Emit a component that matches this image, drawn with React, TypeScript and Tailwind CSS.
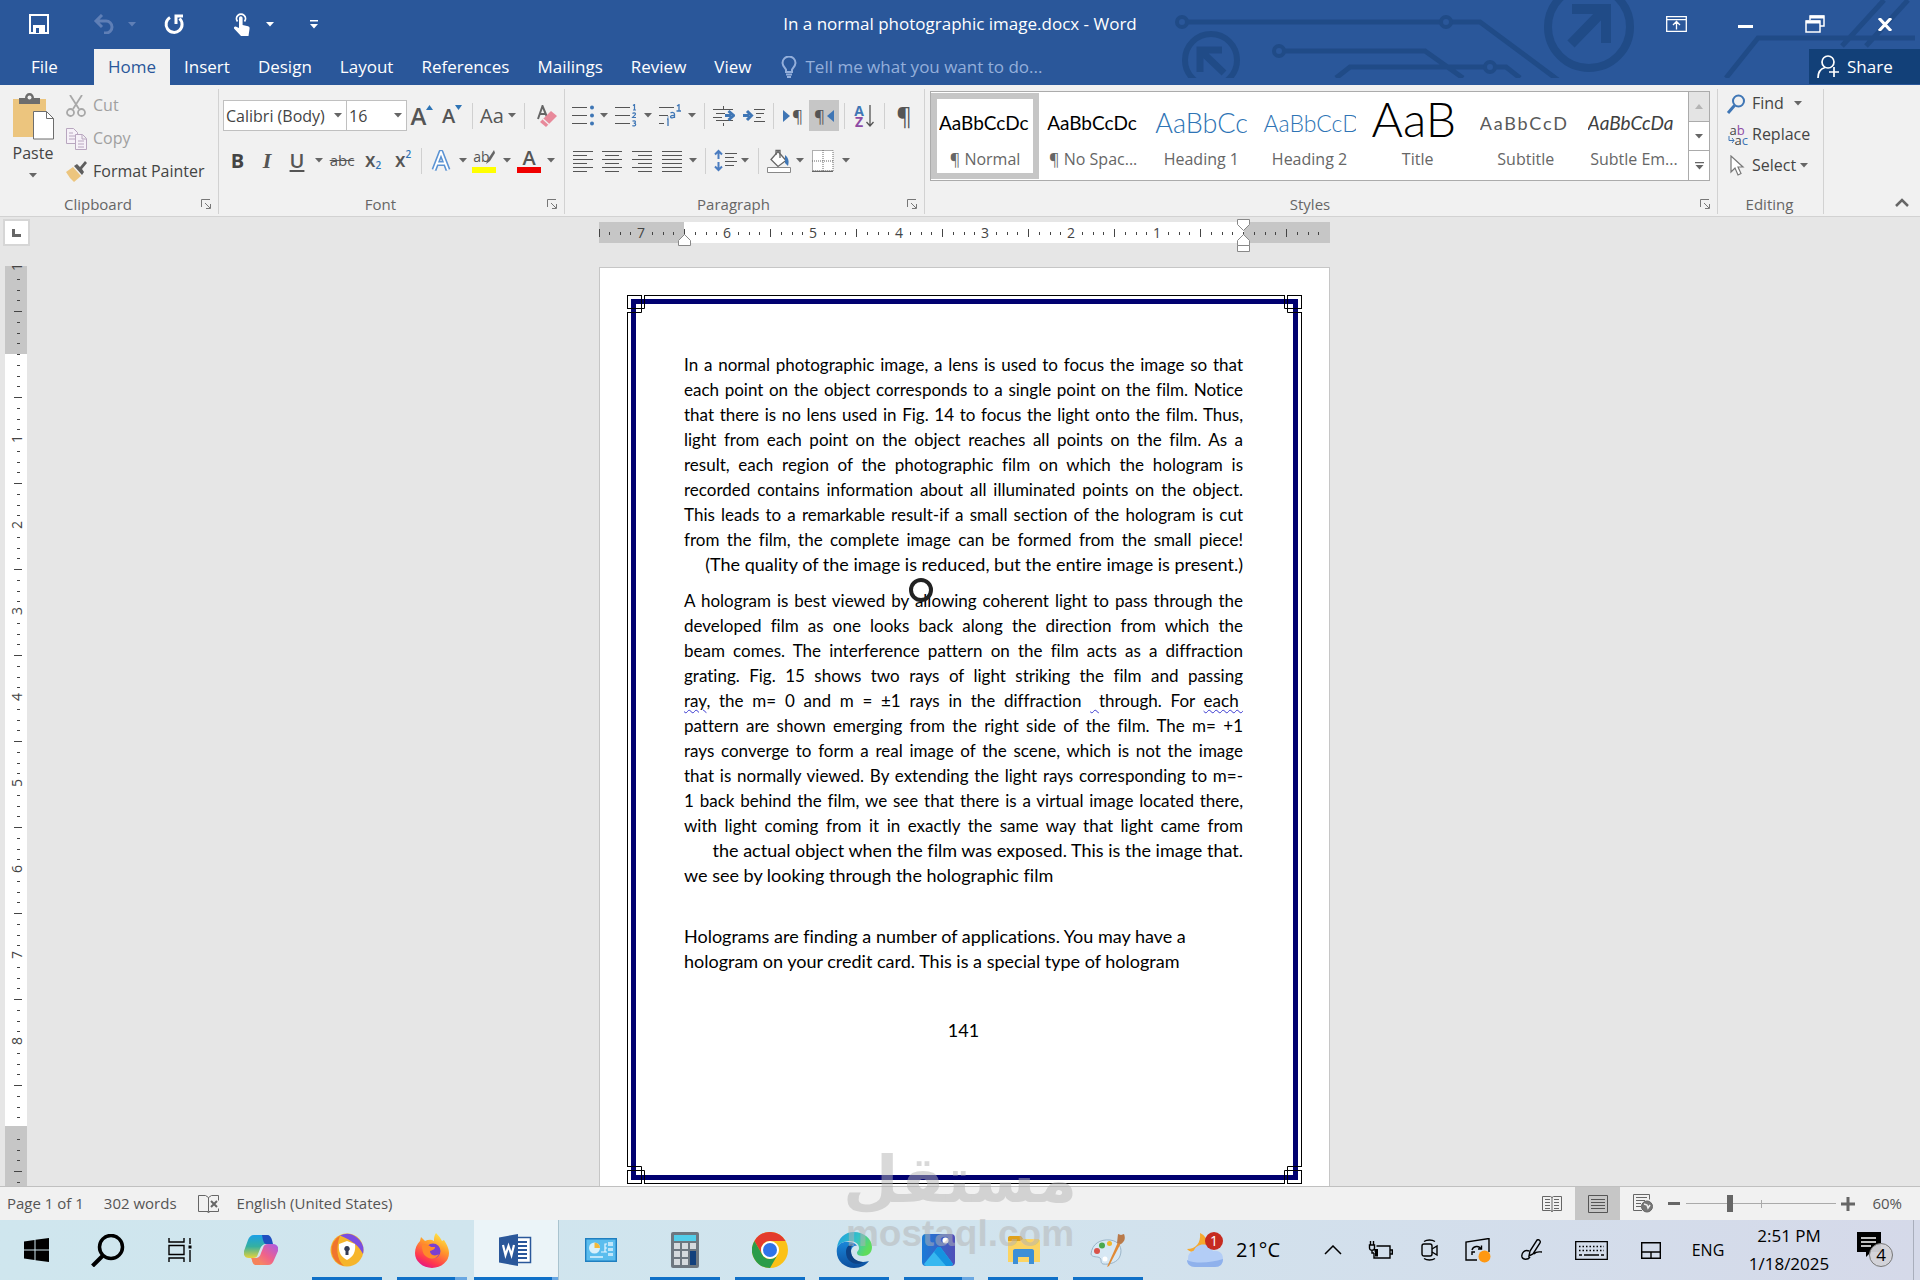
import type { ReactNode } from "react";
import { clsx } from "clsx";

const UI = "font-['Open_Sans','Noto_Sans',sans-serif]";
const BODY = "font-['Lato','Open_Sans',sans-serif]";

const tabs = ["Home", "Insert", "Design", "Layout", "References", "Mailings", "Review", "View"];

const styleItems = [
  { label: "¶ Normal", sample: "AaBbCcDc", look: "text-[19px] leading-[30px] text-black" },
  { label: "¶ No Spac...", sample: "AaBbCcDc", look: "text-[19px] leading-[30px] text-black" },
  { label: "Heading 1", sample: "AaBbCc", look: "text-[27px] leading-[30px] font-light text-[#2e74b5]" },
  { label: "Heading 2", sample: "AaBbCcD", look: "text-[23px] leading-[30px] font-light text-[#2e74b5]" },
  { label: "Title", sample: "AaB", look: "text-[48px] leading-[39px] font-light text-black" },
  { label: "Subtitle", sample: "AaBbCcD", look: "text-[18px] leading-[30px] tracking-widest text-[#5a5a5a]" },
  { label: "Subtle Em...", sample: "AaBbCcDa", look: "text-[19px] leading-[30px] italic text-[#404040]" },
];

const firstParagraph = [
  "In a normal photographic image, a lens is used to focus the image so that",
  "each point on the object corresponds to a single point on the film. Notice",
  "that there is no lens used in Fig. 14 to focus the light onto the film. Thus,",
  "light from each point on the object reaches all points on the film. As a",
  "result, each region of the photographic film on which the hologram is",
  "recorded contains information about all illuminated points on the object.",
  "This leads to a remarkable result-if a small section of the hologram is cut",
  "from the film, the complete image can be formed from the small piece!",
];

const secondParagraphTop = [
  "A hologram is best viewed by allowing coherent light to pass through the",
  "developed film as one looks back along the direction from which the",
  "beam comes. The interference pattern on the film acts as a diffraction",
  "grating. Fig. 15 shows two rays of light striking the film and passing",
];

const secondParagraphRest = [
  "pattern are shown emerging from the right side of the film. The m= +1",
  "rays converge to form a real image of the scene, which is not the image",
  "that is normally viewed. By extending the light rays corresponding to m=-",
  "1 back behind the film, we see that there is a virtual image located there,",
  "with light coming from it in exactly the same way that light came from",
];

type BtnProps = { label: string; className?: string; children: ReactNode };

function Btn({ label, className, children }: BtnProps) {
  return (
    <button type="button" aria-label={label} title={label} className={clsx("flex shrink-0 items-center justify-center", className)}>
      {children}
    </button>
  );
}

function Caret({ className = "text-[#666]" }: { className?: string }) {
  return (
    <svg width="8" height="5" viewBox="0 0 8 5" className={clsx("shrink-0", className)} fill="currentColor">
      <path d="M0 0h8L4 4.5z" />
    </svg>
  );
}

function Drop({ label, className = "w-3.5" }: { label: string; className?: string }) {
  return (
    <Btn label={label} className={clsx("h-[31px]", className)}>
      <Caret />
    </Btn>
  );
}

function Sep({ className }: { className: string }) {
  return (
    <div className={clsx("flex h-[26px] shrink-0 justify-center", className)}>
      <div className="w-px bg-[#d0d0d0]" />
    </div>
  );
}

function Launcher({ label }: { label: string }) {
  return (
    <Btn label={label} className="h-5 w-5">
      <svg width="11" height="11" viewBox="0 0 11 11" fill="none" stroke="#777">
        <path d="M.5 8V.5H9M4 4l5 5M9.500 5v4.500H5" />
      </svg>
    </Btn>
  );
}

function Group({ name, launcher = true, className, children }: { name: string; launcher?: boolean; className?: string; children: ReactNode }) {
  return (
    <section aria-label={name} className={clsx("flex flex-col border-r border-[#d2d2d2]", className)}>
      <div className="flex-1">{children}</div>
      <div className="flex h-5 items-center pr-0.5">
        <span className="flex-1 text-center text-[15px] leading-5 text-[#666]">{name}</span>
        {launcher && <Launcher label={`${name} settings`} />}
      </div>
    </section>
  );
}

/* ---------- title bar ---------- */

function Circuit() {
  return (
    <svg className="pointer-events-none absolute right-0 top-0" width="750" height="78" viewBox="0 0 750 78" fill="none" stroke="#204b87" strokeWidth="5">
      <circle cx="12" cy="22" r="5" strokeWidth="4" />
      <path d="M18 22H270M282 22h28l78 58" />
      <circle cx="276" cy="22" r="5" strokeWidth="4" />
      <circle cx="41" cy="60" r="26" strokeWidth="6" />
      <path d="M30 72V50h22M31 51l23 22" strokeWidth="7" />
      <circle cx="109" cy="51" r="5" strokeWidth="4" />
      <path d="M115 51h140l38 27M166 78l14-11h134" />
      <circle cx="320" cy="67" r="5" strokeWidth="4" />
      <path d="M326 67h10l14 11" />
      <circle cx="419" cy="27" r="41" strokeWidth="8" />
      <path d="M402 9h34v34M434 10l-33 34" strokeWidth="10" />
      <path d="M556 78l32-40h157M672 46L714 0M696 46L738 0" />
    </svg>
  );
}

function TitleBar() {
  return (
    <div className="grid h-12 grid-cols-[1fr_auto_1fr] items-center">
      <div className="flex items-center text-white">
        <Btn label="Save" className="ml-6 w-[30px]">
          <svg width="20" height="20" viewBox="0 0 20 20" fill="none" stroke="currentColor" strokeWidth="2">
            <path d="M1 1h18v18H1z" />
            <path d="M5 19v-7h10v7" fill="currentColor" />
            <path d="M8.500 14v5" stroke="#2a579a" strokeWidth="3" />
          </svg>
        </Btn>
        <Btn label="Undo" className="ml-9 w-7">
          <svg width="22" height="20" viewBox="0 0 22 20" fill="none" stroke="#5f7fb6" strokeWidth="3">
            <path d="M9 1L3 7l6 6M3 7h10a6 6 0 0 1 0 12h-2" />
          </svg>
        </Btn>
        <Btn label="Undo history" className="ml-1 w-5">
          <Caret className="text-[#5f7fb6]" />
        </Btn>
        <Btn label="Repeat" className="ml-[18px] w-7">
          <svg width="22" height="22" viewBox="0 0 22 22" fill="none" stroke="currentColor" strokeWidth="3">
            <path d="M7 4.500A8 8 0 1 0 16.500 5.500" />
            <path d="M13 11V3h7" />
          </svg>
        </Btn>
        <Btn label="Touch mode" className="ml-10 w-7">
          <svg width="20" height="24" viewBox="0 0 20 24" fill="currentColor">
            <path d="M7 6a1.800 1.800 0 0 1 3.600 0v7l5.500 1.200a2 2 0 0 1 1.500 2.300L16.500 24H9l-7-7.500a1.500 1.500 0 0 1 2.300-1.700L7 16z" />
            <path d="M5.500 9.500a4.500 4.500 0 1 1 7 0" fill="none" stroke="currentColor" strokeWidth="1.800" />
          </svg>
        </Btn>
        <Btn label="Touch mode options" className="ml-1 w-5">
          <Caret className="text-white" />
        </Btn>
        <Btn label="Customize toolbar" className="ml-6 w-5">
          <svg width="8" height="9" viewBox="0 0 8 9" fill="currentColor">
            <path d="M0 0h8v1.500H0zM0 4h8L4 8.500z" />
          </svg>
        </Btn>
      </div>
      <h1 className="text-[17px] leading-6 text-white">In a normal photographic image.docx - Word</h1>
      <div className="flex items-center justify-end text-white">
        <Btn label="Ribbon display options" className="w-[69px]">
          <svg width="21" height="16" viewBox="0 0 21 16" fill="none" stroke="currentColor" strokeWidth="1.300">
            <path d="M.7.7h19.600v14.600H.7zM.7 3.700h19.600M10.500 13.500V6M7 9l3.500-3.500L14 9" />
          </svg>
        </Btn>
        <Btn label="Minimize" className="w-[69px] pt-1">
          <span className="h-[3px] w-[15px] bg-white" />
        </Btn>
        <Btn label="Restore" className="w-[70px]">
          <svg width="20" height="18" viewBox="0 0 20 18" fill="none" stroke="currentColor" strokeWidth="1.500">
            <path d="M5 5V1h14v10h-4M1 6h14v11H1z" />
            <path d="M1 7h14M5 2h14" strokeWidth="3" />
          </svg>
        </Btn>
        <Btn label="Close" className="w-[70px]">
          <svg width="14" height="13" viewBox="0 0 14 13" stroke="currentColor" strokeWidth="3">
            <path d="M1 0l12 13M13 0L1 13" />
          </svg>
        </Btn>
      </div>
    </div>
  );
}

function TabRow() {
  return (
    <nav className="flex h-[37px] items-stretch pt-px text-[17px] text-white">
      <a href="#file" className="flex w-[94px] items-center pl-[31px]">File</a>
      {tabs.map((tab) => (
        <a
          key={tab}
          href={`#${tab.toLowerCase()}`}
          className={clsx("flex items-center px-[14px]", tab === "Home" && "bg-[#f1f1f1] text-[#2a579a]")}
        >
          {tab}
        </a>
      ))}
      <label className="ml-4 flex items-center gap-2 text-[#94afdb]">
        <svg width="16" height="22" viewBox="0 0 16 22" fill="none" stroke="currentColor" strokeWidth="2">
          <path d="M5 16v-2.500C3 11 1.500 9.500 1.500 7a6.500 6.500 0 0 1 13 0c0 2.500-1.500 4-3.500 6.500V16zM5 18.500h6M6 21h4" />
        </svg>
        <input type="text" aria-label="Tell me what you want to do" placeholder="Tell me what you want to do..." className="w-[260px] bg-transparent placeholder:text-[#94afdb] outline-none" />
      </label>
      <button type="button" className="mb-px ml-auto flex w-[111px] items-center gap-2 bg-[#124078] pl-2">
        <svg width="22" height="24" viewBox="0 0 22 24" fill="none" stroke="currentColor" strokeWidth="1.700">
          <circle cx="11" cy="7" r="6" />
          <path d="M1 23c0-6 3-9.500 7-10.500M17 12v10M12 17h10" />
        </svg>
        Share
      </button>
    </nav>
  );
}

/* ---------- ribbon ---------- */

function ClipboardGroup() {
  return (
    <Group name="Clipboard" className="w-[219px]">
      <div className="flex">
        <button type="button" className="ml-[5px] mt-1 flex w-14 flex-col items-center text-[16px] leading-6 text-[#444]">
          <svg width="42" height="48" viewBox="0 0 42 48">
            <path d="M1 6h33v38H1z" fill="#ecc57e" />
            <path d="M7 11V5h6c0-3 2-5 4.500-5S22 2 22 5h6v6z" fill="#6d6d6d" />
            <circle cx="17.500" cy="4.500" r="2" fill="#f1f1f1" />
            <path d="M21.500 18.500h13l7 7V46h-20z" fill="#fff" stroke="#6d6d6d" />
            <path d="M34.500 18.500v7h7" fill="none" stroke="#6d6d6d" />
          </svg>
          Paste
          <Caret className="mt-2 text-[#666]" />
        </button>
        <div className="ml-[5px] flex flex-col gap-2 pt-1 text-[16px] leading-[25px]">
          <button type="button" className="flex items-center gap-1.5 text-[#a0a0a0]">
            <svg width="21" height="22" viewBox="0 0 21 22" fill="none" stroke="#a8a8a8" strokeWidth="1.800">
              <path d="M4 0l9 14M16 0L7 14" />
              <circle cx="4.500" cy="17.500" r="3.500" />
              <circle cx="15.500" cy="17.500" r="3.500" />
            </svg>
            Cut
          </button>
          <button type="button" className="flex items-center gap-1.5 text-[#a0a0a0]">
            <svg width="21" height="22" viewBox="0 0 21 22" fill="#f6f1f8" stroke="#b8a6bf">
              <path d="M.5.5h7l4 4v11H.5zM3 5h4M3 8h6M3 11h6" />
              <path d="M9.500 6.500h7l4 4v11h-11zM16 7v4h4M12 13h6M12 16h6M12 19h6" />
            </svg>
            Copy
          </button>
          <button type="button" className="flex items-center gap-1.5 text-[#444]">
            <svg width="21" height="21" viewBox="0 0 21 21">
              <path d="M0 11l7-5 8 9-7 6-4-4z" fill="#ecc57e" />
              <path d="M8 5l3-2 3 3 5-6 2 2-5 6 2 3-2 3z" fill="#5e5e5e" />
            </svg>
            Format Painter
          </button>
        </div>
      </div>
    </Group>
  );
}

function Combo({ label, value, className }: { label: string; value: string; className: string }) {
  return (
    <div className={clsx("relative h-[31px] shrink-0 border border-[#c0c0c0] bg-white", className)}>
      <select aria-label={label} className="h-full w-full appearance-none overflow-hidden bg-transparent pl-0.5 pr-3.5 text-[16px] text-[#444]">
        <option>{value}</option>
      </select>
      <span className="pointer-events-none absolute inset-y-0 right-1 flex items-center">
        <Caret />
      </span>
    </div>
  );
}

function FontGroup() {
  return (
    <Group name="Font" className="w-[346px]">
      <div className="flex flex-col gap-3.5 pl-1 pt-[11px] text-[#555]">
        <div className="flex h-[31px] items-center">
          <Combo label="Font name" value="Calibri (Body)" className="w-[124px]" />
          <Combo label="Font size" value="16" className="-ml-px w-[61px]" />
          <Btn label="Grow font" className="w-[30px] text-[24px] font-semibold leading-[31px]">
            A<svg width="7" height="5" viewBox="0 0 7 5" fill="#2e74b5" className="mb-4"><path d="M0 5h7L3.500 0z" /></svg>
          </Btn>
          <Btn label="Shrink font" className="w-[30px] text-[20px] font-semibold leading-[31px]">
            A<svg width="7" height="5" viewBox="0 0 7 5" fill="#2e74b5" className="mb-4"><path d="M0 0h7L3.500 5z" /></svg>
          </Btn>
          <Sep className="w-2.5" />
          <Btn label="Change case" className="w-[42px] gap-1 text-[20px] leading-[31px]">
            Aa <Caret />
          </Btn>
          <Sep className="w-2.5" />
          <Btn label="Clear formatting" className="w-[36px]">
            <svg width="20" height="22" viewBox="0 0 20 22">
              <path d="M1 14L5.500 1 10 12M3 9h5" fill="none" stroke="#666" strokeWidth="2" />
              <path d="M3 17L14 6l6 5L9 22z" fill="#e8899a" />
              <path d="M6 14l6 5.500" stroke="#f1f1f1" strokeWidth="1.200" />
            </svg>
          </Btn>
        </div>
        <div className="flex h-[31px] items-center">
          <Btn label="Bold" className="w-[29px] text-[20px] font-bold leading-[31px] text-[#444]">B</Btn>
          <Btn label="Italic" className="w-[30px] font-['Liberation_Serif',serif] text-[22px] font-bold italic leading-[31px]">I</Btn>
          <Btn label="Underline" className="w-[30px] text-[20px] font-semibold leading-[31px] underline underline-offset-2">U</Btn>
          <Drop label="Underline style" />
          <Btn label="Strikethrough" className="w-8 text-[15px] leading-[31px] line-through">abc</Btn>
          <Btn label="Subscript" className="w-[30px] text-[19px] font-semibold leading-[31px]">
            x<sub className="mt-1 text-[10px] text-[#2e74b5]">2</sub>
          </Btn>
          <Btn label="Superscript" className="w-[30px] text-[19px] font-semibold leading-[31px]">
            x<sup className="mb-1 text-[10px] text-[#2e74b5]">2</sup>
          </Btn>
          <Sep className="w-1.5" />
          <Btn label="Text effects" className="w-[34px]">
            <svg width="20" height="22" viewBox="0 0 20 22" fill="none" strokeLinejoin="round">
              <path d="M3 20L10 2l7 18M6 13.500h8" stroke="#5b93d3" strokeWidth="5" />
              <path d="M3 20L10 2l7 18M6 13.500h8" stroke="#fff" strokeWidth="2" />
            </svg>
          </Btn>
          <Drop label="Text effect options" className="w-2.5" />
          <Btn label="Highlight colour" className="w-8 flex-col">
            <span className="flex h-[18px] text-[14px] leading-4">
              ab
              <svg width="9" height="17" viewBox="0 0 9 17" className="-ml-1">
                <path d="M8 1L2 10l-2 5 4-3 5-8z" fill="#666" />
              </svg>
            </span>
            <span className="h-1.5 w-6 bg-[#ff0]" />
          </Btn>
          <Drop label="Highlight colours" />
          <Btn label="Font colour" className="w-[30px] flex-col">
            <span className="h-[18px] text-[20px] font-semibold leading-[18px]">A</span>
            <span className="h-1.5 w-6 bg-[#f00000]" />
          </Btn>
          <Drop label="Font colours" />
        </div>
      </div>
    </Group>
  );
}

function AlignIcon({ d }: { d: string }) {
  return (
    <svg width="20" height="22" viewBox="0 0 20 22" stroke="#555" strokeWidth="1">
      <path d={d} />
    </svg>
  );
}

function ListLines() {
  return <path d="M0 3.500h15M0 11.500h15M0 19.500h15" stroke="#555" />;
}

function ParagraphGroup() {
  return (
    <Group name="Paragraph" className="w-[360px]">
      <div className="flex flex-col gap-3.5 pl-1 pt-[11px] text-[#555]">
        <div className="flex h-[31px] items-center">
          <Btn label="Bullets" className="w-[28px]">
            <svg width="22" height="23" viewBox="0 0 22 23">
              <ListLines />
              <g fill="#3f76b5"><circle cx="20" cy="3.500" r="2" /><circle cx="20" cy="11.500" r="2" /><circle cx="20" cy="19.500" r="2" /></g>
            </svg>
          </Btn>
          <Drop label="Bullet library" />
          <Btn label="Numbering" className="w-[30px]">
            <svg width="22" height="23" viewBox="0 0 22 23">
              <ListLines />
              <g fill="none" stroke="#3f76b5" strokeWidth="1.200">
                <path d="M18 1.500l1.500-1V6M18 6h3M17.500 9.500c1-1 3-.8 3 .5 0 1.200-2 2-3 3.500h3.500M17.500 17.300c1-.8 3-.6 3 .6 0 .8-.8 1.200-1.800 1.200 1.200 0 2 .6 2 1.500 0 1.500-2.200 1.600-3.300.9" />
              </g>
            </svg>
          </Btn>
          <Drop label="Numbering library" />
          <Btn label="Multilevel list" className="w-[30px]">
            <svg width="23" height="23" viewBox="0 0 23 23">
              <path d="M0 3.500h15M0 11.500h9M0 19.500h5" stroke="#555" />
              <g fill="none" stroke="#3f76b5" strokeWidth="1.300">
                <path d="M18 2l2-1.300V7M17.500 7H22M11.500 9c1.500-1 4-.7 4 1.200V14M15.500 11.300c-2-.1-4 .2-4 1.500 0 1.500 3 1.500 4-.3M8 15h1v7M9 12.500v1" />
              </g>
            </svg>
          </Btn>
          <Drop label="Multilevel library" />
          <Sep className="w-2.5" />
          <Btn label="Decrease indent" className="w-[30px]">
            <svg width="22" height="20" viewBox="0 0 22 20" fill="none" stroke="#555">
              <path d="M0 3.500h20M3 7.500h9M0 11.500h9M3 14.500h17M10.500 0v3M10.500 17v3" />
              <path d="M12 9.500h6M15.500 5l5 4.500-5 4.500" stroke="#3f76b5" strokeWidth="3" />
            </svg>
          </Btn>
          <Btn label="Increase indent" className="w-[30px]">
            <svg width="22" height="16" viewBox="0 0 22 16" fill="none" stroke="#555">
              <path d="M11 1.500h11M13 5.500h8M13 9.500h5M11 13.500h11" />
              <path d="M0 7.500h6M4 3l4.500 4.500L4 12" stroke="#3f76b5" strokeWidth="3" />
            </svg>
          </Btn>
          <Sep className="w-2" />
          <Btn label="Left-to-right" className="w-8 gap-0.5">
            <svg width="7" height="12" viewBox="0 0 7 12" fill="#3f76b5"><path d="M0 0v12l7-6z" /></svg>
            <span className="text-[17px] leading-[31px]">¶</span>
          </Btn>
          <Btn label="Right-to-left" className="h-[31px] w-[30px] gap-0.5 bg-[#c6c6c6]">
            <span className="text-[17px] leading-[31px]">¶</span>
            <svg width="7" height="12" viewBox="0 0 7 12" fill="#3f76b5"><path d="M7 0v12L0 6z" /></svg>
          </Btn>
          <Sep className="w-2.5" />
          <Btn label="Sort" className="w-[30px] gap-0.5">
            <span className="flex flex-col text-[14px] font-bold leading-[11px]">
              <span className="text-[#3f76b5]">A</span>
              <span className="text-[#8e4ba5]">Z</span>
            </span>
            <svg width="8" height="22" viewBox="0 0 8 22" fill="none" stroke="#555" strokeWidth="1.300"><path d="M4 0v21M.5 17L4 21l3.500-4" /></svg>
          </Btn>
          <Sep className="w-2.5" />
          <Btn label="Show paragraph marks" className="w-[30px] text-[24px] leading-[31px]">¶</Btn>
        </div>
        <div className="flex h-[31px] items-center">
          <Btn label="Align left" className="w-[28px]"><AlignIcon d="M0 1.500h20M0 5.500h14M0 9.500h20M0 13.500h14M0 17.500h20M0 21.500h14" /></Btn>
          <Btn label="Center" className="w-[30px]"><AlignIcon d="M0 1.500h20M3 5.500h14M0 9.500h20M3 13.500h14M0 17.500h20M3 21.500h14" /></Btn>
          <Btn label="Align right" className="w-[30px]"><AlignIcon d="M0 1.500h20M6 5.500h14M0 9.500h20M6 13.500h14M0 17.500h20M6 21.500h14" /></Btn>
          <Btn label="Justify" className="w-[30px]"><AlignIcon d="M0 1.500h20M0 5.500h20M0 9.500h20M0 13.500h20M0 17.500h20M0 21.500h20" /></Btn>
          <Drop label="Justify options" className="w-3" />
          <Sep className="w-3" />
          <Btn label="Line spacing" className="w-[28px]">
            <svg width="23" height="23" viewBox="0 0 23 23" fill="none">
              <path d="M11 4.500h12M11 8.500h9M11 12.500h12M11 16.500h9" stroke="#555" />
              <path d="M4.500 10V2M1 5.500L4.500 2 8 5.500M4.500 13v8M1 17.500L4.500 21 8 17.500" stroke="#4a7cc0" strokeWidth="2" />
            </svg>
          </Btn>
          <Drop label="Line spacing options" className="w-3" />
          <Sep className="w-3.5" />
          <Btn label="Shading" className="w-[28px]">
            <svg width="24" height="24" viewBox="0 0 24 24" fill="none">
              <path d="M11 2.500l8 9-8 6-7-7z" fill="#fff" stroke="#666" strokeWidth="1.300" />
              <path d="M9 6V1.500h4V9" stroke="#666" strokeWidth="1.300" />
              <path d="M18 6c4 3 4 7 3 11l-3-3z" fill="#3f76b5" />
              <path d="M.5 18.500h23v5H.5z" fill="#fff" stroke="#888" />
            </svg>
          </Btn>
          <Drop label="Shading colours" />
          <Btn label="Borders" className="w-[32px]">
            <svg width="22" height="22" viewBox="0 0 22 22" fill="#fff" stroke="#666">
              <path d="M.5.500h20.500v20.500H.5zM11 0v21M0 11h21" strokeDasharray="1 1" />
              <path d="M0 21.500h21" strokeWidth="1.500" />
            </svg>
          </Btn>
          <Drop label="Border options" />
        </div>
      </div>
    </Group>
  );
}

function StylesGroup() {
  return (
    <Group name="Styles" className="min-w-0 flex-1">
      <div className="ml-[5px] mr-[7px] mt-[2px] flex h-[90px] border border-[#ababab] bg-white">
        <div className="flex min-w-0 flex-1">
          {styleItems.map((item, i) => (
            <button
              key={item.label}
              type="button"
              className={clsx(
                "my-px flex min-w-0 flex-1 flex-col items-center overflow-hidden",
                i === 0 ? "border-[6px] border-[#c6c6c6] px-0.5" : "px-2 py-1.5"
              )}
            >
              <span className={clsx("flex h-[39px] w-full shrink-0 items-end overflow-hidden whitespace-nowrap", BODY, item.look)}>{item.sample}</span>
              <span className="mt-2 whitespace-nowrap text-[16px] leading-[26px] text-[#666]">{item.label}</span>
            </button>
          ))}
        </div>
        <div className="flex w-[21px] flex-col divide-y divide-[#ababab] border-l border-[#ababab]">
          <Btn label="Previous styles" className="flex-1 bg-[#e4e4e4]">
            <svg width="8" height="5" viewBox="0 0 8 5" fill="#b4b4b4"><path d="M0 5h8L4 0z" /></svg>
          </Btn>
          <Btn label="Next styles" className="flex-1"><Caret /></Btn>
          <Btn label="More styles" className="flex-1">
            <svg width="9" height="8" viewBox="0 0 9 8" fill="#666"><path d="M0 0h9v1.200H0zM.5 3h8l-4 4.500z" /></svg>
          </Btn>
        </div>
      </div>
    </Group>
  );
}

function EditingGroup() {
  return (
    <Group name="Editing" launcher={false} className="w-[106px]">
      <div className="flex flex-col items-start gap-1.5 pl-2 text-[16px] leading-[25px] text-[#444]">
        <button type="button" className="mt-0.5 flex items-center gap-1.5">
          <svg width="20" height="20" viewBox="0 0 20 20" fill="none" stroke="#3f76b5" strokeWidth="2">
            <circle cx="12.500" cy="7" r="5.500" /><path d="M8.500 11.500L2 19" strokeWidth="3" />
          </svg>
          Find
          <span className="ml-1"><Caret /></span>
        </button>
        <button type="button" className="flex items-center gap-1">
          <span className="flex w-[22px] flex-col text-[13px] leading-[10px]">
            <span>a<span className="text-[#8e4ba5]">b</span></span>
            <span className="flex items-center justify-end">
              <svg width="7" height="8" viewBox="0 0 7 8" fill="none" stroke="#3f76b5"><path d="M1 0v4.500h5M4 2l2 2.500L4 7" /></svg>
              a<span className="text-[#3f76b5]">c</span>
            </span>
          </span>
          Replace
        </button>
        <button type="button" className="flex items-center gap-1.5">
          <svg width="20" height="22" viewBox="0 0 20 22" fill="#fff" stroke="#777" strokeWidth="1.200">
            <path d="M5 1v16l4-4 3 7 3-1.500-3-6.500h5z" />
          </svg>
          <span className="flex items-center gap-1">Select <Caret /></span>
        </button>
      </div>
    </Group>
  );
}

function Ribbon() {
  return (
    <div className="flex h-[132px] items-stretch border-b border-[#d2d2d2] bg-[#f1f1f1] pb-0.5 pt-1">
      <ClipboardGroup />
      <FontGroup />
      <ParagraphGroup />
      <StylesGroup />
      <EditingGroup />
      <div className="flex w-24 items-end justify-end pb-0.5 pr-2">
        <Btn label="Collapse ribbon" className="h-5 w-5">
          <svg width="14" height="9" viewBox="0 0 14 9" fill="none" stroke="#666" strokeWidth="2.500"><path d="M1 8l6-6 6 6" /></svg>
        </Btn>
      </div>
    </div>
  );
}

/* ---------- rulers ---------- */

const INCH = 86;

// Tick marks every eighth of an inch, taller at the half, none where a number stands.
function ticks(from: number, to: number, zero: number) {
  const marks: { at: number; half: boolean }[] = [];
  for (let n = Math.ceil(((from - zero) * 8) / INCH); zero + (n * INCH) / 8 < to; n++) {
    if (n !== 0 && n % 8 === 0) continue;
    marks.push({ at: zero + (n * INCH) / 8, half: Math.abs(n % 8) === 4 });
  }
  return marks;
}

function HorizontalRuler() {
  return (
    <svg width="731" height="36" viewBox="0 0 731 36" className="block shrink-0" fontSize="14" fill="#444">
      <path d="M0 5h731v21H0z" fill="#c6c6c6" />
      <path d="M85 5h560v21H85z" fill="#fff" />
      <path d="M0 12h1v8H0z" />
      {ticks(4, 728, 644).map((t) => (
        <path key={t.at} d={t.half ? `M${Math.round(t.at)} 12h1v8h-1z` : `M${Math.round(t.at)} 15h1v3h-1z`} />
      ))}
      {[1, 2, 3, 4, 5, 6, 7].map((n) => (
        <text key={n} x={644 - n * INCH} y="21" textAnchor="middle">{n}</text>
      ))}
      <g fill="#fff" stroke="#888">
        <path d="M79.500 28.500v-5l6-6 6 6v5z" />
        <path d="M638.500 2.500h12v5l-6 6-6-6z" />
        <path d="M638.500 28.500v-5l6-6 6 6v5z" />
        <path d="M638.500 28.500h12v6h-12z" />
      </g>
    </svg>
  );
}

function VerticalRuler() {
  return (
    <svg width="22" height="922" viewBox="0 0 22 922" className="block" fontSize="14" fill="#444">
      <path d="M0 0h22v922H0z" fill="#c6c6c6" />
      <path d="M0 88h22v772H0z" fill="#fff" />
      {ticks(8, 922, 88).map((t) => (
        <path key={t.at} d={t.half ? `M9 ${Math.round(t.at)}v1h8v-1z` : `M12 ${Math.round(t.at)}v1h3v-1z`} />
      ))}
      {[-1, 1, 2, 3, 4, 5, 6, 7, 8].map((n) => (
        <text key={n} transform={`translate(17 ${87 + n * INCH}) rotate(-90)`} textAnchor="middle">{Math.abs(n)}</text>
      ))}
    </svg>
  );
}

/* ---------- document ---------- */

function Corner({ className }: { className: string }) {
  return (
    <svg width="20" height="20" viewBox="0 0 20 20" className={clsx("pointer-events-none absolute", className)} fill="none">
      <path d="M15 .5h2M.5 14v3" stroke="#fff" strokeWidth="1" />
      <path d="M17.500 .5v13H.5V.5h14v17H.5" stroke="#000" />
    </svg>
  );
}

function Justified({ children }: { children: ReactNode }) {
  return <span className="block whitespace-nowrap text-justify text-[17px] [text-align-last:justify]">{children}</span>;
}

const squiggle = "underline decoration-[#3a3ad0] decoration-wavy decoration-1 underline-offset-2";

function Page() {
  return (
    <article className="relative w-[731px] border border-[#c6c6c6] bg-white px-[27px] pb-8 pt-[27px]">
      <div className="relative border border-black p-[3px]">
        <div
          className={clsx(
            "border-[5px] border-[#000070] pb-[132px] pl-[48px] pr-[50px] pt-[48px] text-[18px] leading-[25px] text-black [font-variant-ligatures:none]",
            BODY
          )}
        >
          <p>
            {firstParagraph.map((line) => <Justified key={line}>{line}</Justified>)}
            <span className="block text-right">(The quality of the image is reduced, but the entire image is present.)</span>
          </p>
          <p className="mt-[11px]">
            {secondParagraphTop.map((line) => <Justified key={line}>{line}</Justified>)}
            <Justified>
              <span className={squiggle}>ray</span>, the m= 0 and m = ±1 rays in the diffraction <span className={squiggle}>&nbsp;</span>through. For <span className={squiggle}>each&nbsp;</span>
            </Justified>
            {secondParagraphRest.map((line) => <Justified key={line}>{line}</Justified>)}
            <span className="block text-right">the actual object when the film was exposed. This is the image that.</span>
            <span className="block">we see by looking through the holographic film</span>
          </p>
          <p className="mt-9">
            Holograms are finding a number of applications. You may have a
            <br />
            hologram on your credit card. This is a special type of hologram
          </p>
          <p className="mt-11 text-center">141</p>
        </div>
        <Corner className="-left-px -top-px" />
        <Corner className="-right-px -top-px -scale-x-100" />
        <Corner className="-bottom-px -left-px -scale-y-100" />
        <Corner className="-bottom-px -right-px -scale-100" />
      </div>
      <span className="absolute left-[309px] top-[310px] h-6 w-6 rounded-full border-4 border-[#222]" />
    </article>
  );
}

function Workspace() {
  return (
    <main className="flex min-h-0 flex-1 overflow-hidden bg-[#e6e6e6]">
      <div className="flex w-7 shrink-0 flex-col">
        <div className="h-[49px] shrink-0 pl-[3px] pt-0.5">
          <button type="button" aria-label="Tab stop" className="flex h-[27px] w-[27px] items-center justify-center border-2 border-[#d6d6d6] bg-white">
            <svg width="9" height="8" viewBox="0 0 9 8" fill="none" stroke="#666" strokeWidth="3"><path d="M1.500 0v6.500H9" /></svg>
          </button>
        </div>
        <div className="pl-[5px]"><VerticalRuler /></div>
      </div>
      <div className="flex flex-1 flex-col items-center pr-[19px]">
        <HorizontalRuler />
        <div className="pt-[14px]"><Page /></div>
      </div>
    </main>
  );
}

/* ---------- status bar ---------- */

function StatusBar() {
  return (
    <footer className="flex h-[34px] shrink-0 items-center border-t border-[#c0c0c0] bg-[#f1f1f1] text-[15px] text-[#555]">
      <span className="pl-[7px]">Page 1 of 1</span>
      <span className="pl-5">302 words</span>
      <Btn label="Proofing" className="ml-5 w-6">
        <svg width="22" height="18" viewBox="0 0 22 18" fill="none" stroke="#666">
          <path d="M10.500 16.500H.5V.5h7l3 2zM10.500 2.500l3-2h7v5M10.500 16.500h10v-3M9 16l1.500 2 1.500-2" />
          <path d="M13 6l6 6M19 6l-6 6" strokeWidth="2" />
        </svg>
      </Btn>
      <span className="pl-4">English (United States)</span>
      <div className="ml-auto flex h-full items-center">
        <Btn label="Read mode" className="h-full w-[46px]">
          <svg width="20" height="18" viewBox="0 0 20 18" fill="none" stroke="#666">
            <path d="M.5 1.500h8l1.500 1 1.500-1h8v14h-8l-1.500 1-1.500-1h-8zM10 2v15M3 4.500h5M3 7.500h5M3 10.500h5M3 13.500h5M12 4.500h5M12 7.500h5M12 10.500h5M12 13.500h5" />
          </svg>
        </Btn>
        <Btn label="Print layout" className="h-full w-[45px] bg-[#c6c6c6]">
          <svg width="20" height="18" viewBox="0 0 20 18" fill="none" stroke="#555">
            <path d="M.5.5h19v17H.5zM3 4.500h14M3 7.500h14M3 10.500h14M3 13.500h14" />
          </svg>
        </Btn>
        <Btn label="Web layout" className="h-full w-[46px]">
          <svg width="20" height="19" viewBox="0 0 20 19" fill="none" stroke="#666">
            <path d="M9 16.500H.5V.5h16v5M3 3.500h11M3 6.500h9M3 9.500h5M3 12.500h5" />
            <circle cx="14" cy="12.500" r="5.500" fill="#777" />
            <path d="M11 10l3 1 1 3 2-3" stroke="#f1f1f1" strokeWidth="1.500" />
          </svg>
        </Btn>
        <Btn label="Zoom out" className="w-4"><span className="h-[3px] w-3 bg-[#666]" /></Btn>
        <div className="relative ml-1 flex w-[150px] items-center">
          <span className="absolute left-1/2 h-2 w-px bg-[#aaa]" />
          <input
            type="range"
            aria-label="Zoom"
            min={0}
            max={100}
            defaultValue={28}
            className="relative w-full appearance-none bg-transparent [&::-webkit-slider-runnable-track]:h-px [&::-webkit-slider-runnable-track]:bg-[#aaa] [&::-webkit-slider-thumb]:-mt-2 [&::-webkit-slider-thumb]:h-[17px] [&::-webkit-slider-thumb]:w-1.5 [&::-webkit-slider-thumb]:appearance-none [&::-webkit-slider-thumb]:bg-[#666]"
          />
        </div>
        <Btn label="Zoom in" className="ml-1 w-4">
          <svg width="14" height="14" viewBox="0 0 14 14" stroke="#666" strokeWidth="3"><path d="M7 0v14M0 7h14" /></svg>
        </Btn>
        <span className="pl-4 pr-[18px]">60%</span>
      </div>
    </footer>
  );
}

/* ---------- taskbar ---------- */

function CopilotIcon() {
  return (
    <svg width="34" height="32" viewBox="0 0 34 32">
      <defs>
        <linearGradient id="cp1" x1="0" y1="0" x2="0" y2="1"><stop offset="0" stopColor="#1aa0e8" /><stop offset=".5" stopColor="#35b0a0" /><stop offset="1" stopColor="#e8d33a" /></linearGradient>
        <linearGradient id="cp2" x1="1" y1="0" x2="0" y2="1"><stop offset="0" stopColor="#a55bea" /><stop offset=".5" stopColor="#f0628a" /><stop offset="1" stopColor="#fba04a" /></linearGradient>
      </defs>
      <path d="M10 1h12c3 0 4 2 5 5l1 4h-6c-3 0-5 2-6 5l-2 5c-1 3-2 4-5 4H5c-4 0-6-3-5-7L4 6c1-3 3-5 6-5z" fill="url(#cp1)" />
      <path d="M18 1h5c3 0 4 2 5 5l1 4h-7c-2 0-3-3-4-9z" fill="#1d4fc0" />
      <path d="M24 31H13c-3 0-4-2-5-5l-1-2h4c3 0 5-1 6-5l2-5c1-3 2-4 5-4h5c4 0 6 3 5 7l-4 9c-1 3-3 5-6 5z" fill="url(#cp2)" />
      <path d="M16 31h-4c-3 0-4-3-4-7h4c3 0 4 3 4 7z" fill="#f5825a" />
    </svg>
  );
}

function SecureBrowserIcon() {
  return (
    <svg width="34" height="34" viewBox="0 0 34 34">
      <circle cx="17" cy="17" r="16.500" fill="#f6b52b" />
      <path d="M10 2.500A16.500 16.500 0 0 1 33 21c-4-8-10-13-23-18.500z" fill="#7a4ee0" />
      <path d="M10 2.500A16.500 16.500 0 0 0 14 33C6 26 6 14 10 2.500z" fill="#f0752c" />
      <path d="M17 8l8 3c1 8-2 13-8 16-6-3-9-8-8-16z" fill="#fff" />
      <path d="M17 13a2.700 2.700 0 0 1 1.500 5v4h-3v-4a2.700 2.700 0 0 1 1.500-5z" fill="#333a55" />
    </svg>
  );
}

function FirefoxIcon() {
  return (
    <svg width="34" height="35" viewBox="0 0 34 35">
      <defs>
        <linearGradient id="ff" x1=".8" y1="0" x2=".3" y2="1"><stop offset="0" stopColor="#fff04a" /><stop offset=".4" stopColor="#ff9a2b" /><stop offset=".8" stopColor="#ff3750" /><stop offset="1" stopColor="#e31587" /></linearGradient>
      </defs>
      <path d="M21 0c4 4 5 6 6 8l2-1c4 6 5 10 5 13a17 15 0 0 1-34 0C0 15 2 11 5 8l1-4 4 4c3-1 6-2 9 0 0-3 0-5 2-8z" fill="url(#ff)" />
      <circle cx="18" cy="18" r="7.500" fill="#7b3fd0" />
      <path d="M7 12c4-2 7 0 9 2h4c0 3-3 3-5 4 0 4 5 6 9 3-2 5-8 6-12 3-4-2-5-7-5-12z" fill="#ff8a2a" />
    </svg>
  );
}

function WordIcon() {
  return (
    <svg width="33" height="32" viewBox="0 0 33 32">
      <path d="M18 3.500h13.500v25H18z" fill="#fff" stroke="#2a579a" strokeWidth="1.500" />
      <path d="M19 8h9M19 12h9M19 16h9M19 20h9M19 24h9" stroke="#2a579a" strokeWidth="1.800" />
      <path d="M0 3.500L19 0v32L0 28.500z" fill="#2a579a" />
      <path d="M4 11l2.500 10L9.500 12l3 9L15 11" fill="none" stroke="#fff" strokeWidth="2.200" />
    </svg>
  );
}

function ControlPanelIcon() {
  return (
    <svg width="32" height="24" viewBox="0 0 32 24">
      <path d="M.7.7h30.600v22.600H.7z" fill="#5bbdee" stroke="#1f7fc0" strokeWidth="1.400" />
      <circle cx="9.500" cy="10" r="5.500" fill="#d9f0fb" />
      <path d="M9.500 10V4.500a5.500 5.500 0 0 1 5.500 5.500z" fill="#f4b93a" />
      <path d="M16 14h4V6h2M20 10h2M20 14h2" fill="none" stroke="#e6f6ff" strokeWidth="1.200" />
      <path d="M23 4h5v4h-5zM23 10h5v3h-5zM23 15h5v3h-5zM5 18h13v2H5z" fill="#bfe6fa" />
    </svg>
  );
}

function CalculatorIcon() {
  return (
    <svg width="28" height="36" viewBox="0 0 28 36">
      <rect width="28" height="36" rx="2" fill="#6d7780" />
      <path d="M3 3h22v6H3z" fill="#52cdea" />
      <path d="M3 11h6v6H3zM11 11h6v6h-6zM19 11h6v6h-6zM3 19h6v6H3zM11 19h6v6h-6zM3 27h6v6H3zM11 27h6v6h-6z" fill="#d5dade" />
      <path d="M19 19h6v14h-6z" fill="#12407c" />
    </svg>
  );
}

function ChromeIcon() {
  return (
    <svg width="36" height="36" viewBox="0 0 36 36">
      <circle cx="18" cy="18" r="18" fill="#fbc116" />
      <path d="M2.400 9A18 18 0 0 1 33.600 9H18a9 9 0 0 0-7.800 13.500z" fill="#e33b2e" />
      <path d="M2.400 9A18 18 0 0 0 18 36l7.800-13.500a9 9 0 0 1-15.600 0z" fill="#2a9c4a" />
      <circle cx="18" cy="18" r="9" fill="#fff" />
      <circle cx="18" cy="18" r="7" fill="#2f73e8" />
    </svg>
  );
}

function EdgeIcon() {
  return (
    <svg width="36" height="36" viewBox="0 0 36 36">
      <defs>
        <linearGradient id="ed1" x1="0" y1="0" x2="1" y2=".4"><stop offset="0" stopColor="#1b9de2" /><stop offset=".6" stopColor="#35c3c6" /><stop offset="1" stopColor="#5fdc5c" /></linearGradient>
        <linearGradient id="ed2" x1="0" y1="0" x2="0" y2="1"><stop offset="0" stopColor="#1a86d9" /><stop offset="1" stopColor="#0d4f9e" /></linearGradient>
      </defs>
      <path d="M1 16C2 6 9 0 18 0c10 0 18 7 18 15 0 6-4 9-9 9-4 0-6-1-6-3s2-2 2-5c0-4-4-7-9-7C8 9 3 11 1 16z" fill="url(#ed1)" />
      <path d="M1 16c2-5 7-7 12-6 4 0 7 2 8 4-3-1-6 2-6 6 0 6 6 10 12 10 3 0 5-1 6-1-3 4-8 7-15 7C8 36-1 28 1 16z" fill="url(#ed2)" />
      <path d="M10 20c0-5 3-8 7-8-2 2-2 4-2 7 0 7 6 11 12 11-4 4-17 2-17-10z" fill="#0e4386" />
    </svg>
  );
}

function PhotosIcon() {
  return (
    <svg width="33" height="32" viewBox="0 0 33 32">
      <defs>
        <linearGradient id="ph" x1="0" y1="0" x2="1" y2="0"><stop offset="0" stopColor="#1a7bd8" /><stop offset="1" stopColor="#4f4fb8" /></linearGradient>
      </defs>
      <rect width="33" height="32" rx="4" fill="url(#ph)" />
      <circle cx="23.500" cy="6.500" r="3" fill="#fff" />
      <path d="M2 30l13-16c1-1.500 3-1.500 4 0l12 16c-1 1.500-2 2-3 2H5c-1 0-2 0-3-2z" fill="#37b8f0" />
      <path d="M17 13c1 0 1.500.5 2 1l12 16c-1 1.500-2 2-3 2h-4L12 18l3-4c.5-.7 1-1 2-1z" fill="#1593e0" />
    </svg>
  );
}

function ExplorerIcon() {
  return (
    <svg width="33" height="28" viewBox="0 0 33 28">
      <path d="M1 2c0-1 .5-2 2-2h11l3 4h14c1 0 2 1 2 2v3H1z" fill="#e0a21c" />
      <path d="M1 5h12l3-2h15c1 0 2 1 2 2v21H1z" fill="#fcd462" />
      <path d="M6 28V15c0-1 .7-2 2-2h17c1.300 0 2 1 2 2v13h-5v-7H11v7z" fill="#3d8fd6" />
    </svg>
  );
}

function PaintIcon() {
  return (
    <svg width="36" height="36" viewBox="0 0 36 36">
      <path d="M1 22C2 12 10 7 20 8c9 1 13 8 10 16-2 6-10 9-17 8-3-1-1-4-3-6s-8 0-9-4z" fill="#d7e8f4" stroke="#9ab4c8" />
      <circle cx="7" cy="19" r="3" fill="#d9534a" />
      <circle cx="12" cy="13.500" r="3" fill="#4aa84e" />
      <circle cx="19.500" cy="11.500" r="2.500" fill="#f2b82e" />
      <circle cx="15" cy="27" r="2.500" fill="#fff" />
      <path d="M28 10l3 1-12 23-2 1z" fill="#e08a36" />
      <path d="M27 11l1-9 3 1 3-1c2 5 0 8-3 10z" fill="#b97a4a" />
    </svg>
  );
}

const apps = [
  { name: "Secure Browser", icon: <SecureBrowserIcon />, running: true },
  { name: "Firefox", icon: <FirefoxIcon />, running: true, stacked: true },
  { name: "Word", icon: <WordIcon />, running: true, stacked: true, active: true },
  { name: "Control Panel", icon: <ControlPanelIcon />, running: false },
  { name: "Calculator", icon: <CalculatorIcon />, running: true },
  { name: "Chrome", icon: <ChromeIcon />, running: true },
  { name: "Edge", icon: <EdgeIcon />, running: true },
  { name: "Photos", icon: <PhotosIcon />, running: true, stacked: true },
  { name: "File Explorer", icon: <ExplorerIcon />, running: true },
  { name: "Paint", icon: <PaintIcon />, running: true },
];

function Taskbar() {
  return (
    <div className="flex h-[60px] shrink-0 items-stretch bg-linear-to-r from-[#cfe6ee] via-[#d1e4ee] to-[#d5d9e9] text-black">
      <Btn label="Start" className="w-[72px]">
        <svg width="25" height="24" viewBox="0 0 25 24"><path d="M0 3.500L10.500 2v9.500H0zM11.500 1.800L25 0v11.500H11.500zM0 12.500h10.500V22L0 20.500zM11.500 12.500H25V24l-13.500-1.800z" /></svg>
      </Btn>
      <Btn label="Search" className="w-[71px]">
        <svg width="34" height="33" viewBox="0 0 34 33" fill="none" stroke="#000" strokeWidth="3.500"><circle cx="20" cy="13" r="11.500" /><path d="M12 21.500L1.500 32" strokeWidth="4" /></svg>
      </Btn>
      <Btn label="Task view" className="w-[74px]">
        <svg width="24" height="24" viewBox="0 0 24 24" fill="none" stroke="#000" strokeWidth="1.400">
          <path d="M1 0v4h15V0M1 7.500h15v9H1zM1 24v-4h15v4M22 0v6M22 12v12" /><path d="M20.500 7.500h3v3h-3z" fill="#000" stroke="none" />
        </svg>
      </Btn>
      <Btn label="Copilot" className="w-[88px]"><CopilotIcon /></Btn>
      <div className="grid w-[845px] grid-cols-10">
        {apps.map((app) => (
          <button key={app.name} type="button" aria-label={app.name} className={clsx("flex flex-col items-center pt-3", app.active && "border-r border-[#a9c3cf] bg-[#ebf4f8]")}>
            <span className="flex h-9 items-center">{app.icon}</span>
            {app.running && (
              <span className={clsx("mt-auto flex h-[3px]", app.active ? "w-full" : "w-[70px]")}>
                <span className="flex-1 bg-[#0f70c8]" />
                {app.stacked && <span className={clsx("bg-[#69a7e2]", app.active ? "w-1.5" : "w-3")} />}
              </span>
            )}
          </button>
        ))}
      </div>
      <div className="ml-auto flex items-center">
        <button type="button" className="mr-8 flex items-center gap-3 text-[20px]">
          <svg width="38" height="36" viewBox="0 0 38 36">
            <path d="M14 1c1 10-4 16-13 16 4 5 16 5 19-3 2-6-1-11-6-13z" fill="#f6a92f" />
            <path d="M9 35a8.500 8.500 0 0 1-1-16.500C10 12 22 9 27 19c7-1 10 3 10 8 0 5-3 8-8 8z" fill="#b3cdf6" />
            <path d="M9 35c-5 0-8-3-8-7 8 4 24 3 36-1 0 5-3 8-8 8z" fill="#8fb1ec" />
            <circle cx="28" cy="9" r="9" fill="#c62b20" />
            <text x="28" y="14" textAnchor="middle" fontSize="14" fill="#fff">1</text>
          </svg>
          21°C
        </button>
        <Btn label="Hidden icons" className="w-[42px]">
          <svg width="18" height="10" viewBox="0 0 18 10" fill="none" stroke="#000" strokeWidth="1.500"><path d="M1 9l8-8 8 8" /></svg>
        </Btn>
        <Btn label="Battery" className="w-[52px]">
          <svg width="25" height="19" viewBox="0 0 25 19" fill="none" stroke="#000" strokeWidth="1.400">
            <path d="M8.500 5H22v12H6v-5M22 9h2.300v4H22M1.500 4h5v3c0 3-5 3-5 0zM2.500 4V0M5.500 4V0M4 9v3h2" /><path d="M6 8h4v7.500H7V12" fill="#000" stroke="none" />
          </svg>
        </Btn>
        <Btn label="Meet now" className="w-[48px]">
          <svg width="18" height="22" viewBox="0 0 18 22" fill="none" stroke="#000" strokeWidth="1.400">
            <rect x="1" y="5" width="10" height="12" rx="2" /><path d="M11 10l5-3v9l-5-3M3 2.500c3-2 8-2 11 0M3 19.500c3 2 8 2 11 0" />
          </svg>
        </Btn>
        <Btn label="Updates" className="w-[48px]">
          <svg width="26" height="25" viewBox="0 0 26 25" fill="none" stroke="#000" strokeWidth="1.400">
            <path d="M12 22H1V4l23-3.500V14" /><path d="M7 12c1-4 7-5 9-1M16.500 7.500V11H13M7 17v-3h3" /><circle cx="19.500" cy="18.500" r="6" fill="#ff9812" stroke="none" />
          </svg>
        </Btn>
        <Btn label="Pen workspace" className="w-[59px]">
          <svg width="22" height="22" viewBox="0 0 22 22" fill="none" stroke="#000" strokeWidth="1.400">
            <path d="M8 17l1-5 7-11c2-1 4 1 3 3l-7 11zM8 12c-4-2-8 2-7 6 1 3 6 3 8 0M13 15c2-3 5-2 8-2" />
          </svg>
        </Btn>
        <Btn label="Touch keyboard" className="w-[60px]">
          <svg width="33" height="19" viewBox="0 0 33 19" fill="none" stroke="#000" strokeWidth="1.300">
            <path d="M.7.700h31.600v17.600H.7z" /><path d="M4 5.500h25M4 9.500h25" strokeDasharray="1.500 2" /><path d="M4 14h3M9 14h15M26 14h3" />
          </svg>
        </Btn>
        <Btn label="Touchpad" className="w-[60px]">
          <svg width="20" height="17" viewBox="0 0 20 17" fill="none" stroke="#000" strokeWidth="1.400"><path d="M.7.700h18.600v15.600H.7zM.7 10h18.600M10 10v6" /></svg>
        </Btn>
        <button type="button" className="w-[54px] text-[16px]">ENG</button>
        <button type="button" className="w-[108px] whitespace-nowrap text-center text-[17px] leading-7">
          2:51 PM
          <br />
          1/18/2025
        </button>
        <Btn label="Notifications" className="ml-2.5 w-11">
          <svg width="38" height="38" viewBox="0 0 38 38">
            <path d="M1 1h24v20H15l-5 5v-5H1z" /><path d="M5 7h15M5 11h15M5 15h10" stroke="#fff" strokeWidth="1.500" />
            <circle cx="25" cy="24" r="11.500" fill="#d3d3d8" fillOpacity=".95" stroke="#777" /><text x="25" y="30" textAnchor="middle" fontSize="17">4</text>
          </svg>
        </Btn>
        <div className="ml-4 mr-1.5 w-px self-stretch bg-[#a9aebc]" />
      </div>
    </div>
  );
}

function Watermark() {
  return (
    <div className="pointer-events-none absolute bottom-[26px] left-1/2 flex w-[230px] -translate-x-1/2 flex-col items-center text-[#b4b4b4] opacity-50">
      <span dir="rtl" className="font-['DejaVu_Sans',sans-serif] text-[64px] font-bold leading-[68px]">مستقل</span>
      <span className="font-['Liberation_Sans',sans-serif] text-[37px] font-bold leading-10">mostaql.com</span>
    </div>
  );
}

export default function App() {
  return (
    <div className={clsx("relative flex h-screen flex-col overflow-hidden", UI)}>
      <header className="shrink-0">
        <div className="relative bg-[#2a579a]">
          <Circuit />
          <div className="relative">
            <TitleBar />
            <TabRow />
          </div>
        </div>
        <Ribbon />
      </header>
      <Workspace />
      <StatusBar />
      <Taskbar />
      <Watermark />
    </div>
  );
}
